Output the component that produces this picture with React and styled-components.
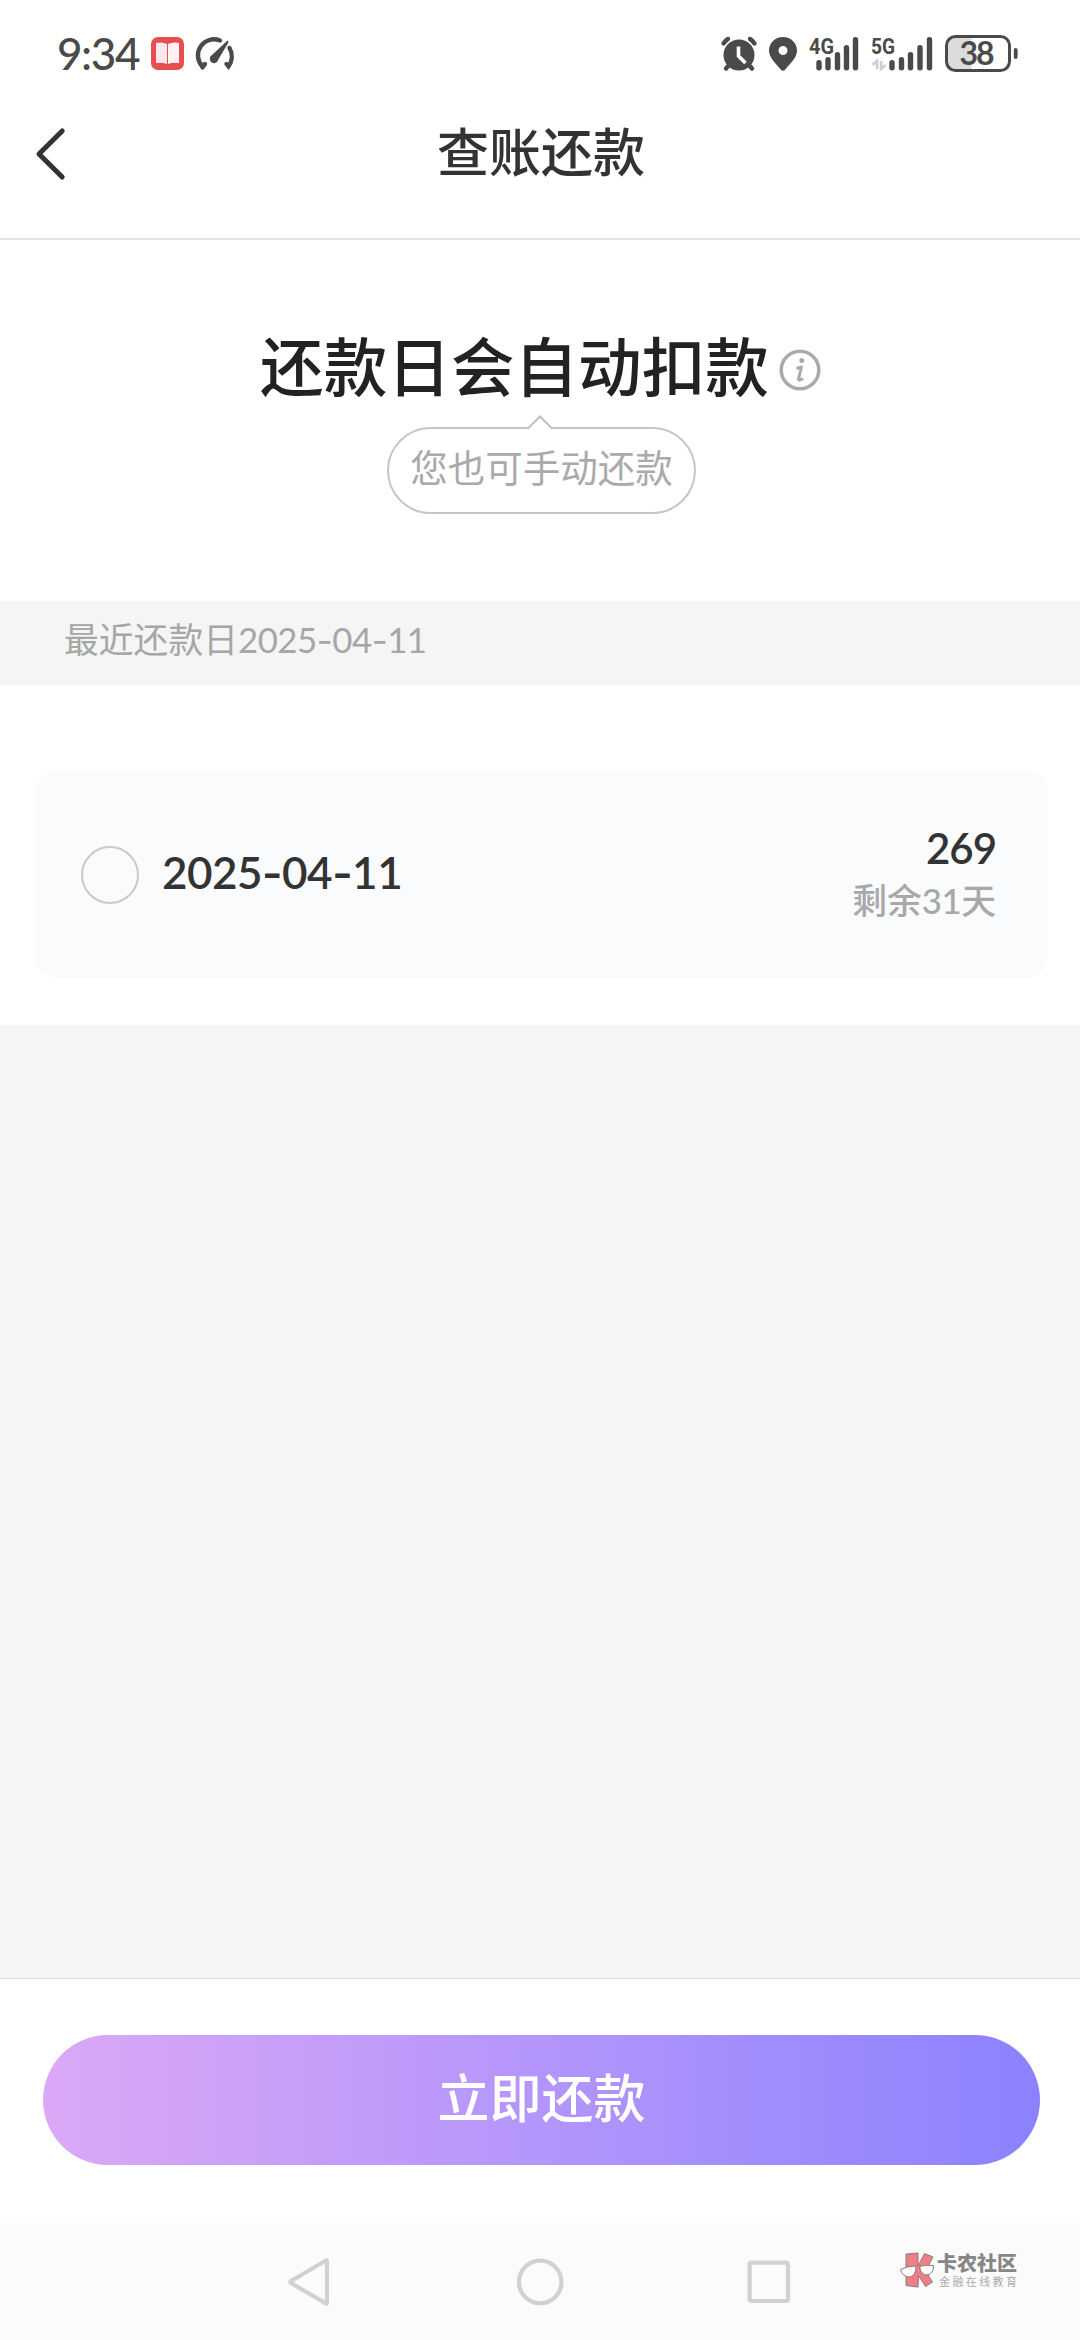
import React, { useState } from 'react'
import styled, { createGlobalStyle } from 'styled-components'

const GlobalStyle = createGlobalStyle`
  * {
    box-sizing: border-box;
  }
  body {
    margin: 0;
    background: #fff;
    font-family: Lato, 'Noto Sans CJK SC', sans-serif;
    -webkit-font-smoothing: antialiased;
  }
`

const Screen = styled.div`
  display: flex;
  flex-direction: column;
  width: 1080px;
  height: 2340px;
  background: #fff;
  overflow: hidden;
`

const StatusBar = styled.header`
  display: flex;
  justify-content: space-between;
  height: 100px;
  padding: 28px 60px 0 57px;
`

const StatusGroup = styled.div`
  display: flex;
  height: 52px;
`

const Clock = styled.span`
  width: 94px;
  font-size: 44px;
  font-weight: 500;
  line-height: 51px;
  letter-spacing: -1.4px;
  color: #4a4a4a;
  white-space: nowrap;
`

const StatusIcons = styled.svg`
  display: block;
  overflow: visible;
`

const NavHeader = styled.div`
  display: grid;
  grid-template-columns: 100px 1fr 100px;
  height: 140px;
  border-bottom: 2px solid #e3e3e3;
`

const BackButton = styled.button`
  display: flex;
  align-items: flex-start;
  padding: 27px 0 0 34px;
  border: 0;
  background: none;
`

const Title = styled.h1`
  margin: 0;
  padding: 14px 0 0 2px;
  font-size: 52px;
  font-weight: 500;
  line-height: 76px;
  text-align: center;
  color: #333;
`

const Summary = styled.section`
  display: flex;
  flex-direction: column;
  align-items: center;
  height: 361px;
  padding-top: 80px;
`

const HeadingRow = styled.div`
  display: flex;
  align-items: center;
  height: 94px;
  margin-left: 1px;
`

const Heading = styled.h2`
  margin: 0;
  font-size: 63.6px;
  font-weight: 500;
  line-height: 94px;
  color: #222;
`

const InfoIcon = styled.svg`
  margin: 6px 0 0 10px;
`

const Bubble = styled.div`
  position: relative;
  display: flex;
  justify-content: center;
  width: 309px;
  height: 87px;
  margin: 13px 0 0 3px;
  border: 2px solid #c6c6c6;
  border-radius: 44px;
  font-size: 37.5px;
  line-height: 78px;
  color: #aaa;
`

const BubbleTip = styled.svg`
  position: absolute;
  top: -14px;
  left: 138px;
`

const SectionBand = styled.div`
  height: 84px;
  padding-left: 64px;
  background: #f5f5f5;
  font-size: 34.8px;
  line-height: 77px;
  color: #a6a6a6;
`

const BillList = styled.section`
  height: 340px;
  padding: 86px 32px 0 35px;
`

const BillCard = styled.div`
  display: flex;
  align-items: center;
  height: 207px;
  padding: 0 52px 0 46px;
  border-radius: 22px;
  background: #fafbfd;
`

const Radio = styled.button`
  width: 58px;
  height: 58px;
  padding: 0;
  border: 2px solid #c9c9ca;
  border-radius: 50%;
  background: ${({ $checked }) => ($checked ? '#8c83ff' : '#fbfbfc')};
`

const BillDate = styled.span`
  flex: 1;
  padding: 0 0 4px 23px;
  font-size: 44px;
  font-weight: 600;
  line-height: 60px;
  color: #333;
`

const BillInfo = styled.div`
  display: flex;
  flex-direction: column;
  align-items: flex-end;
  padding-bottom: 1px;
`

const Amount = styled.span`
  font-size: 42px;
  font-weight: 600;
  line-height: 53px;
  letter-spacing: -1px;
  color: #333;
`

const Remaining = styled.span`
  font-size: 34.8px;
  font-weight: 500;
  line-height: 51px;
  color: #a8a8a8;
`

const Digits = styled.span`
  letter-spacing: -0.5px;
`

const Dash = styled.span`
  font-family: Inter, sans-serif;
`

const Filler = styled.div`
  flex: 1;
  background: #f5f5f5;
`

const Footer = styled.footer`
  height: 245px;
  padding: 56px 40px 0 43px;
  border-top: 1px solid #dcdcdc;
`

const PayButton = styled.button`
  display: block;
  width: 100%;
  height: 130px;
  padding: 0 0 9px;
  border: 0;
  border-radius: 65px;
  background: linear-gradient(90deg, #dba8f6 0%, #8b82ff 100%);
  font-family: inherit;
  font-size: 52px;
  font-weight: 500;
  color: #fff;
`

const SystemNav = styled.nav`
  display: flex;
  height: 117px;
  padding-left: 286px;
  background: #fbfbfb;
`

const NavIcons = styled.svg`
  flex: none;
  margin-top: 33px;
`

const Brand = styled.div`
  display: flex;
  margin: 29px 0 0 106px;
`

const BrandText = styled.div`
  padding-left: 2px;
  white-space: nowrap;
`

const BrandName = styled.div`
  font-size: 20px;
  font-weight: 900;
  line-height: 23px;
  color: #868686;
`

const BrandSlogan = styled.div`
  padding-left: 2px;
  font-size: 11px;
  line-height: 13px;
  letter-spacing: 2.4px;
  color: #ababab;
`

const AppStatusIcons = () => (
  <StatusIcons width="84" height="52" viewBox="151 28 84 52">
    <rect x="151" y="37" width="33" height="33" rx="7" fill="#e64e52" />
    <path d="M156 43q6-1.500 11 1v20q-5-2-11-1z" fill="#fde6ec" />
    <path d="M179 43q-6-1.500-11 1v20q5-2 11-1z" fill="#fff1f4" />
    <g fill="none" stroke="#4a4a4a" strokeWidth="4.400" strokeLinecap="round">
      <path d="M220 40.500A16 16 0 0 0 202.500 66.500" />
      <path d="M202.500 67.500l2.500-3.500" />
      <path d="M229.500 48A17 17 0 0 1 228.500 66.500l-2-2.500" />
    </g>
    <path d="M227.500 40.500q1.500 1 .8 2.300L218.300 59.500a4.300 4.300 0 1 1-6.600-4.300z" fill="#4a4a4a" />
  </StatusIcons>
)

const signal4g = [[817, 60], [826, 57], [835.500, 52], [844.500, 45], [853.500, 37]]
const signal5g = [[890, 60], [899.500, 57], [908.500, 52], [918, 45], [927.500, 37]]

const SystemStatusIcons = () => (
  <StatusIcons width="300" height="52" viewBox="720 28 300 52" fill="#4a4a4a">
    <circle cx="739" cy="55" r="15.500" />
    <g fill="none" stroke="#4a4a4a" strokeWidth="4.400" strokeLinecap="round">
      <path d="M723.500 43.500q2-3 4.500-4.500M754.500 43.500q-2-3-4.500-4.500M730 64l-4 4.500M748 64l4 4.500" />
    </g>
    <path d="M738.500 46.500v9.500l7 7" fill="none" stroke="#fff" strokeWidth="3.600" />
    <path
      fillRule="evenodd"
      d="M783 37c8 0 14 6 14 13.500 0 7-6 12-11.500 18.700q-2.500 3-5 0C775 62.500 769 57.500 769 50.500 769 43 775 37 783 37zm0 9a4.500 4.500 0 1 0 0 9 4.500 4.500 0 0 0 0-9z"
    />
    {[...signal4g, ...signal5g].map(([x, y]) => (
      <rect key={x} x={x - 0.7} y={y} width="5.400" height={70.500 - y} rx="2.700" />
    ))}
    <g fontFamily="Roboto, sans-serif" fontSize="22" fontWeight="700">
      <text x="809" y="53.500" textLength="25" lengthAdjust="spacingAndGlyphs">4G</text>
      <text x="871" y="53.500" textLength="24" lengthAdjust="spacingAndGlyphs">5G</text>
    </g>
    <path d="M877 69V61l-4.500 4M881 61v8l4.500-4" fill="none" stroke="#cfcfcf" strokeWidth="2.600" />
    <path d="M955 37h16.500v32H955q-8 0-8-8V45q0-8 8-8z" fill="#dcdcdc" />
    <rect x="946.500" y="36.500" width="63" height="34" rx="9" fill="none" stroke="#4a4a4a" strokeWidth="3" />
    <rect x="1013.800" y="48" width="3.800" height="11" rx="1.900" />
    <text x="959.500" y="64.500" fontFamily="Lato, sans-serif" fontSize="32" fontWeight="700" textLength="35">38</text>
  </StatusIcons>
)

const BrandLogo = () => (
  <svg width="35" height="36" viewBox="900 2252 35 36">
    <path
      d="M906 2254l12-1v13l6.500-12.500 8.500 3.500-7.500 14 7 11-7 4.500-7-11-.5 11.500-12-1.500z"
      fill="#f07f85"
      stroke="#8b7b7c"
      strokeWidth="1"
    />
    <path
      d="M900.500 2269.500q7-3.500 15.500-3.500 0 10-6.500 11-7 0-9-7.500zM919.500 2266.500q7-2 14-1 0 8.500-6.500 9.500-6 0-7.500-8.500z"
      fill="#fff"
      stroke="#8b7b7c"
      strokeWidth="1"
    />
  </svg>
)

const DateText = ({ value }) => (
  <Digits>
    {value.split('-').map((part, i) => (
      <React.Fragment key={i}>
        {i > 0 && <Dash>-</Dash>}
        {part}
      </React.Fragment>
    ))}
  </Digits>
)

const bills = [{ date: '2025-04-11', amount: '269', daysLeft: 31 }]

function App() {
  const [selected, setSelected] = useState(null)

  return (
    <Screen>
      <GlobalStyle />
      <StatusBar>
        <StatusGroup>
          <Clock>9:34</Clock>
          <AppStatusIcons />
        </StatusGroup>
        <SystemStatusIcons />
      </StatusBar>
      <NavHeader>
        <BackButton aria-label="返回">
          <svg width="34" height="54" viewBox="34 127 34 54" fill="none">
            <path d="M62.200 131L39 154l23.200 23" stroke="#333" strokeWidth="5" strokeLinecap="round" strokeLinejoin="round" />
          </svg>
        </BackButton>
        <Title>查账还款</Title>
      </NavHeader>
      <Summary>
        <HeadingRow>
          <Heading>还款日会自动扣款</Heading>
          <InfoIcon width="42" height="42" viewBox="0 0 42 42" fill="none" stroke="#aaa">
            <circle cx="21" cy="21" r="18.800" strokeWidth="3.500" />
            <circle cx="22.800" cy="11.500" r="2.500" fill="#aaa" stroke="none" />
            <path d="M17.500 19.500l5-1.500-3 12q0 2.500 4.500-.5" strokeWidth="3" strokeLinejoin="round" />
          </InfoIcon>
        </HeadingRow>
        <Bubble>
          <BubbleTip width="26" height="16" viewBox="0 0 26 16">
            <path d="M1 14L13 1.500 25 14v2H1z" fill="#fff" />
            <path d="M1 13.500L13 1.500l12 12" fill="none" stroke="#c0c0c0" strokeWidth="2" />
          </BubbleTip>
          您也可手动还款
        </Bubble>
      </Summary>
      <SectionBand>
        最近还款日
        <DateText value="2025-04-11" />
      </SectionBand>
      <BillList>
        {bills.map(bill => (
          <BillCard key={bill.date}>
            <Radio
              aria-label={bill.date}
              $checked={selected === bill.date}
              onClick={() => setSelected(bill.date)}
            />
            <BillDate>
              <DateText value={bill.date} />
            </BillDate>
            <BillInfo>
              <Amount>{bill.amount}</Amount>
              <Remaining>
                剩余<Digits>{bill.daysLeft}</Digits>天
              </Remaining>
            </BillInfo>
          </BillCard>
        ))}
      </BillList>
      <Filler />
      <Footer>
        <PayButton>立即还款</PayButton>
      </Footer>
      <SystemNav>
        <NavIcons width="508" height="52" viewBox="286 2256 508 52" fill="none" stroke="#d1d1d1" strokeWidth="4.200" strokeLinejoin="round">
          <path d="M327 2261v42q0 1-1 .5L291 2283q-1.500-1 0-2l35-20.500q1-.5 1 .5z" />
          <circle cx="540.200" cy="2282" r="21.300" />
          <rect x="749.600" y="2262.600" width="38.400" height="38.400" rx="2" />
        </NavIcons>
        <Brand>
          <BrandLogo />
          <BrandText>
            <BrandName>卡农社区</BrandName>
            <BrandSlogan>金融在线教育</BrandSlogan>
          </BrandText>
        </Brand>
      </SystemNav>
    </Screen>
  )
}

export default App
